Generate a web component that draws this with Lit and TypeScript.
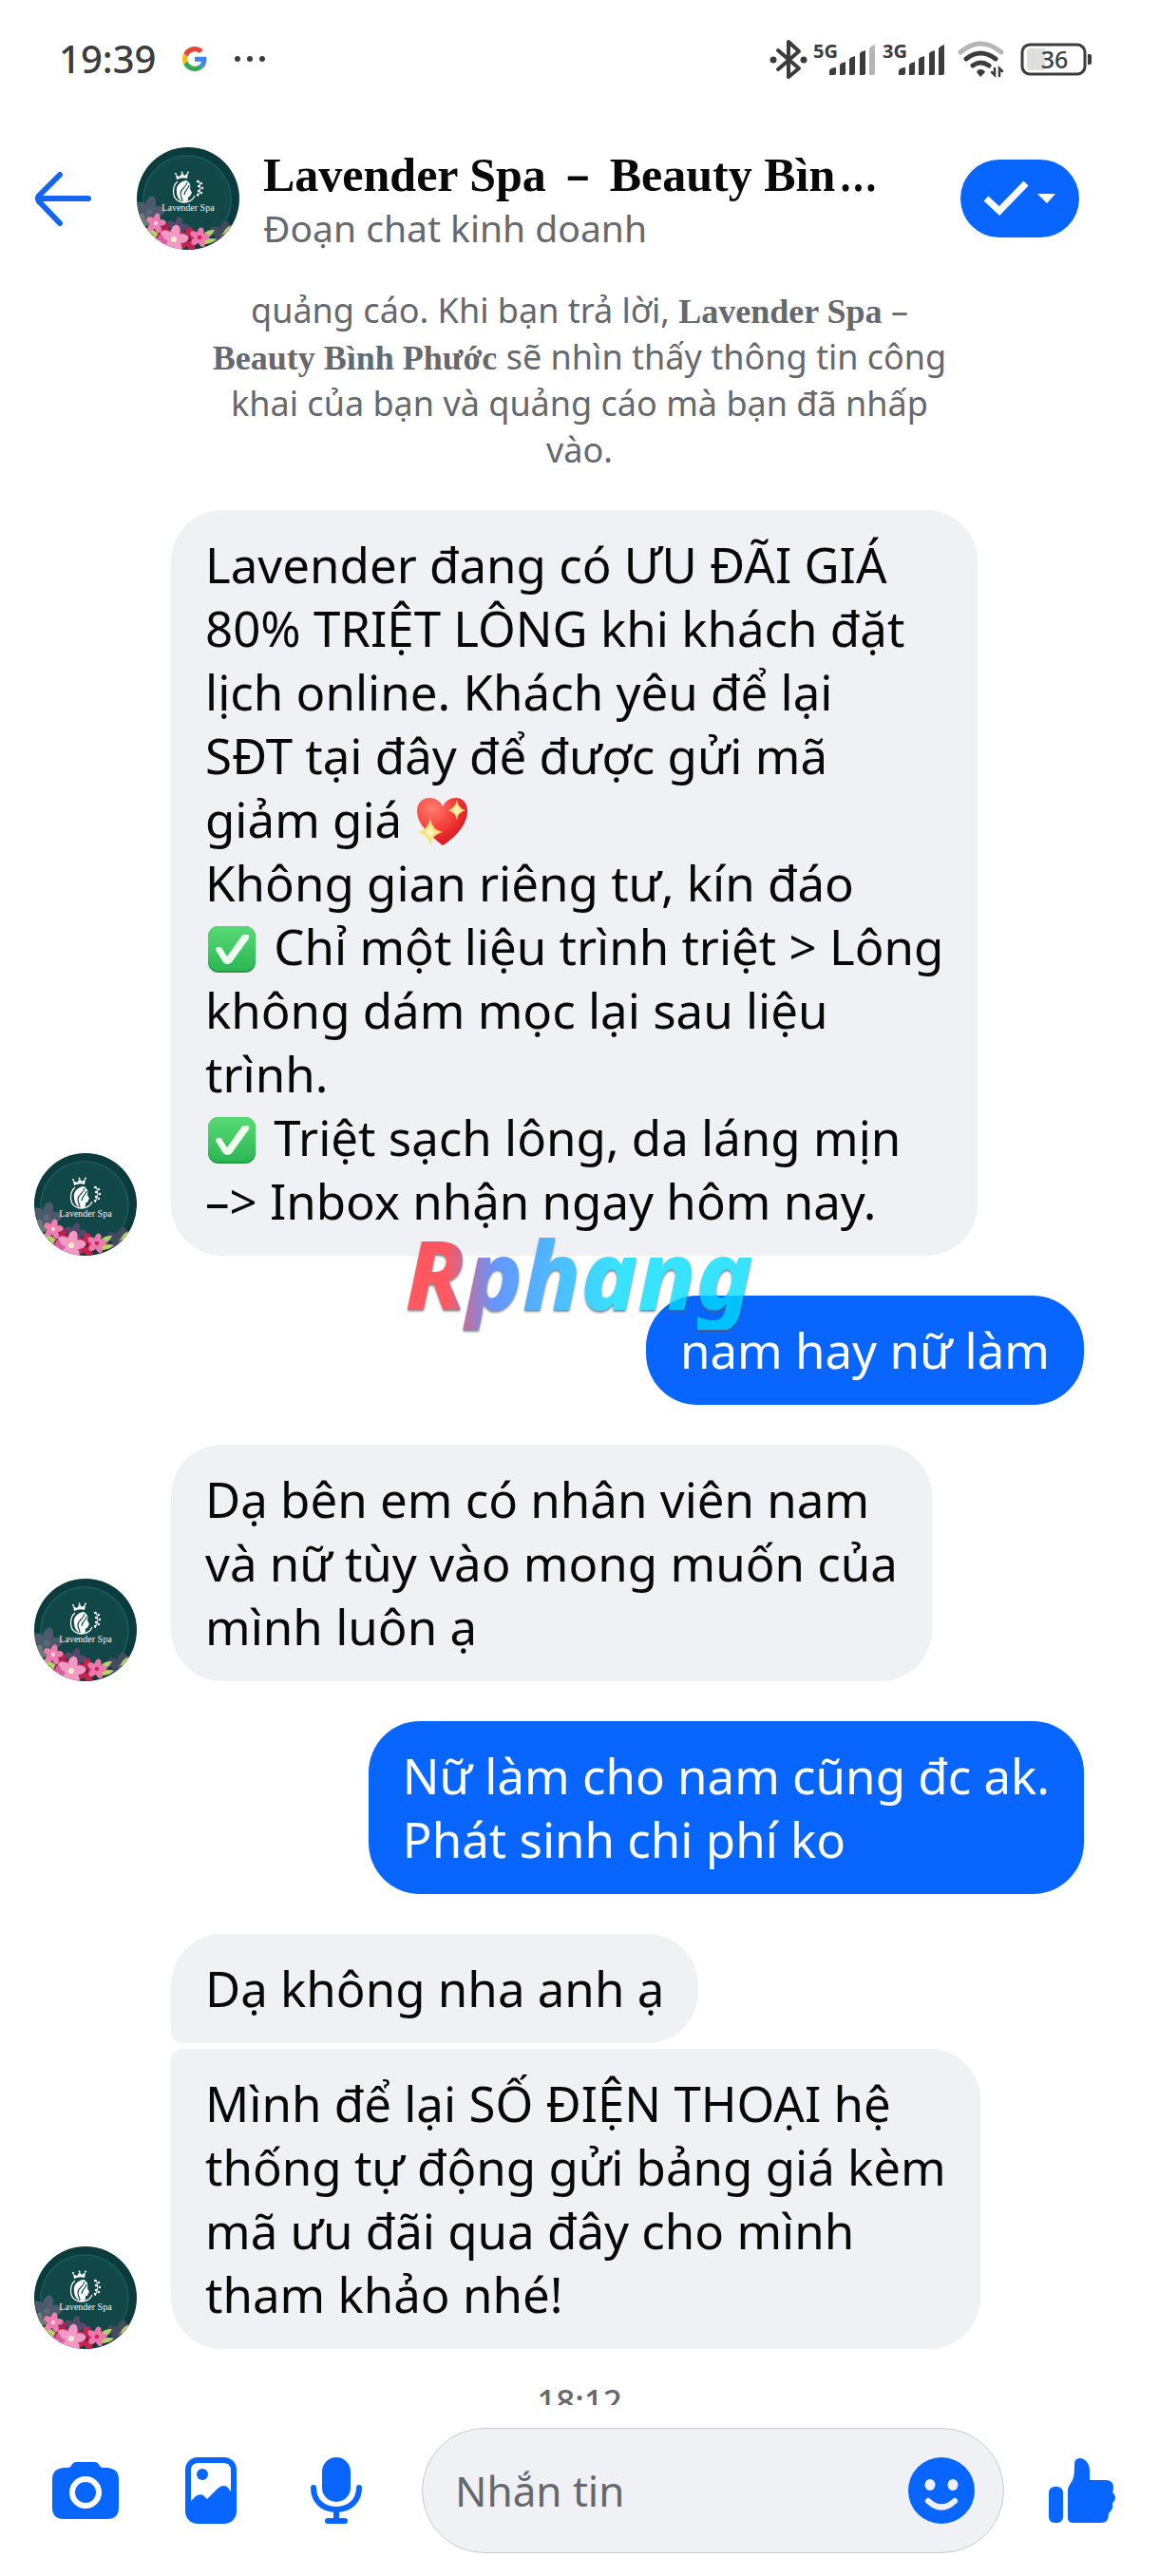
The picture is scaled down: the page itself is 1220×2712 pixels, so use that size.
import { LitElement, html, svg, css } from "lit";
import { customElement, property } from "lit/decorators.js";
import { classMap } from "lit/directives/class-map.js";

type Group = "single" | "first" | "last";

interface Message {
  from: "page" | "me";
  group: Group;
  lines: string[];
}

const MESSAGES: Message[] = [
  {
    from: "page",
    group: "single",
    lines: [
      "Lavender đang có ƯU ĐÃI GIÁ",
      "80% TRIỆT LÔNG khi khách đặt",
      "lịch online. Khách yêu để lại",
      "SĐT tại đây để được gửi mã",
      "giảm giá 💖",
      "Không gian riêng tư, kín đáo",
      "✅ Chỉ một liệu trình triệt > Lông",
      "không dám mọc lại sau liệu",
      "trình.",
      "✅ Triệt sạch lông, da láng mịn",
      "–> Inbox nhận ngay hôm nay.",
    ],
  },
  { from: "me", group: "single", lines: ["nam hay nữ làm"] },
  {
    from: "page",
    group: "single",
    lines: ["Dạ bên em có nhân viên nam", "và nữ tùy vào mong muốn của", "mình luôn ạ"],
  },
  { from: "me", group: "single", lines: ["Nữ làm cho nam cũng đc ak.", "Phát sinh chi phí ko"] },
  { from: "page", group: "first", lines: ["Dạ không nha anh ạ"] },
  {
    from: "page",
    group: "last",
    lines: [
      "Mình để lại SỐ ĐIỆN THOẠI hệ",
      "thống tự động gửi bảng giá kèm",
      "mã ưu đãi qua đây cho mình",
      "tham khảo nhé!",
    ],
  },
];

const heartEmoji = html`<svg class="emoji" viewBox="0 0 59 54" role="img" aria-label="💖">
  <defs>
    <radialGradient id="heart" cx="0.3" cy="0.22" r="0.85">
      <stop offset="0" stop-color="#ff7d70" />
      <stop offset="0.5" stop-color="#f5403c" />
      <stop offset="1" stop-color="#d80f1c" />
    </radialGradient>
  </defs>
  <path
    fill="url(#heart)"
    d="M30 52C20 44 3 31 3 16C3 7 9 2 16 2C23 2 28 6 30 11C33 5 38 2 44 2C51 2 56 8 56 16C56 32 40 46 30 52Z"
  />
  <path fill="#ffe27a" d="M45 4Q46 13 54 15Q46 17 45 25Q43 17 36 15Q43 13 45 4Z" />
  <path fill="#ffe27a" d="M17 24Q19 36 30 38Q19 40 17 52Q14 40 3 38Q14 36 17 24Z" />
  <path fill="#fff6c8" d="M45 9Q46 14 49 15Q46 16 45 20Q43 16 41 15Q43 14 45 9ZM17 31Q18 37 23 38Q18 39 17 45Q15 39 11 38Q15 37 17 31Z" />
</svg>`;

const checkEmoji = html`<svg class="emoji" viewBox="0 0 59 54" role="img" aria-label="✅">
  <defs>
    <linearGradient id="tick" x1="0" y1="0" x2="0" y2="1">
      <stop offset="0" stop-color="#58da75" />
      <stop offset="1" stop-color="#2cb755" />
    </linearGradient>
  </defs>
  <rect x="3" y="3" width="50" height="49" rx="11" fill="#27974a" />
  <rect x="3" y="3" width="50" height="47" rx="11" fill="url(#tick)" />
  <path
    fill="#effff0"
    d="M11 28Q11 26 13 25H16Q17 25 18 27L23 35L38 14Q39 12 41 12H45Q47 13 46 16L28 41Q26 43 23 43Q21 43 19 41Z"
  />
</svg>`;

function rich(line: string) {
  return line
    .split(/(💖|✅)/u)
    .map((part) => (part === "💖" ? heartEmoji : part === "✅" ? checkEmoji : part));
}

const flower = (x: number, y: number, r: number, fill: string, core: string) => svg`
  <g transform="translate(${x} ${y})">
    ${[0, 72, 144, 216, 288].map(
      (a) => svg`<ellipse cx="0" cy=${-r * 0.6} rx=${r * 0.38} ry=${r * 0.6} fill=${fill} transform="rotate(${a + 12})"/>`
    )}
    <circle r=${r * 0.24} fill=${core}/>
  </g>`;

@customElement("spa-avatar")
export class SpaAvatar extends LitElement {
  static styles = css`
    :host {
      display: block;
      flex: none;
      width: 108px;
      height: 108px;
      border-radius: 50%;
      overflow: hidden;
    }
    .art {
      display: block;
      width: 100%;
      height: 100%;
    }
    .name {
      font-family: "Liberation Serif", serif;
      font-size: 10px;
    }
  `;

  render() {
    return html`<svg class="art" viewBox="0 0 108 108" role="img" aria-label="Lavender Spa">
      <rect width="108" height="108" fill="#0b3b3c" />
      <circle cx="53" cy="55" r="46" fill="#11484a" stroke="#1d5c5c" stroke-width="1.5" />
      <circle cx="52" cy="56" r="41" fill="#124748" />
      <path fill="#fff" d="M42 34L41 29L45 31L48 27L50 30L54 27L53 33Q48 31 42 34Z" />
      <circle cx="41" cy="28" r="1" fill="#fff" />
      <circle cx="47.500" cy="26.500" r="1" fill="#fff" />
      <circle cx="54" cy="26.500" r="1" fill="#fff" />
      <path fill="#fff" d="M52 35C45 36 41 41 42 47C42 52 45 56 49 58C55 58 54 54 54 52C57 53 56 50 58 48L56 44C57 40 56 37 52 35Z" />
      <path fill="none" stroke="#124748" stroke-width="1.200" d="M53 37C52 43 46 43 46 49C46 52 48 54 48 57M55 40C55 44 50 45 50 50" />
      <path fill="none" stroke="#fff" stroke-width="1.200" d="M43 36C37 41 37 52 43 56C49 60 58 58 61 51" />
      <path fill="none" stroke="#fff" stroke-width="1" d="M64 52Q69 44 65 35" />
      <g fill="#fff">
        <circle cx="64" cy="36" r="1.200" /><circle cx="68" cy="38" r="1.200" />
        <circle cx="65" cy="41" r="1.200" /><circle cx="69" cy="43" r="1.200" />
        <circle cx="65" cy="46" r="1.200" /><circle cx="68" cy="48" r="1.200" />
        <circle cx="64" cy="50" r="1.200" />
      </g>
      ${flower(13, 68, 14, "#4d5a6c", "#5d6678")}
      ${flower(4, 80, 9, "#6d7d74", "#4d5a6c")}
      ${flower(43, 85, 10, "#54496b", "#6b5a80")}
      ${flower(91, 93, 13, "#454a5e", "#5b5a6e")}
      <g fill="#b9cf6a">
        <path d="M8 85Q16 84 25 93Q14 94 8 85ZM12 93Q20 90 30 98Q20 101 12 93Z" />
        <path d="M68 95Q72 86 82 87Q78 96 68 95ZM67 101Q75 94 84 97Q76 104 67 101ZM90 92Q94 84 99 82Q98 90 90 92Z" />
      </g>
      ${flower(29, 90, 9, "#b81f4e", "#7d1236")}
      ${flower(54, 97, 11, "#c22450", "#7d1236")}
      ${flower(20, 80, 9, "#f07db0", "#fbd0e0")}
      ${flower(66, 95, 9, "#ee78ad", "#c22450")}
      ${flower(39, 97, 13, "#f29ac6", "#ffe9c9")}
      ${flower(24, 100, 7, "#d85f9f", "#fbd0e0")}
      <text class="name" x="54" y="67" text-anchor="middle" fill="#f2f5f4">Lavender Spa</text>
    </svg>`;
  }
}

@customElement("chat-message")
export class ChatMessage extends LitElement {
  @property({ attribute: false }) message!: Message;

  static styles = css`
    :host {
      display: block;
    }
    .row {
      display: flex;
      align-items: flex-end;
      gap: 36px;
      padding: 0 79px 0 36px;
    }
    .mine {
      justify-content: flex-end;
    }
    .spacer {
      flex: none;
      width: 108px;
    }
    .bubble {
      margin: 0;
      padding: 24px 36px;
      border-radius: 54px;
      background: #f0f1f5;
      color: #080809;
      font-size: 51px;
      line-height: 67px;
    }
    .mine .bubble {
      background: #0866ff;
      color: #fff;
    }
    .first {
      border-bottom-left-radius: 12px;
    }
    .last {
      border-top-left-radius: 12px;
    }
    .line {
      display: block;
      white-space: nowrap;
    }
    .emoji {
      width: 59px;
      height: 54px;
      vertical-align: -10px;
    }
  `;

  render() {
    const { from, group, lines } = this.message;
    const mine = from === "me";
    return html`<div class=${classMap({ row: true, mine })}>
      ${mine
        ? null
        : group === "first"
          ? html`<span class="spacer"></span>`
          : html`<spa-avatar></spa-avatar>`}
      <p class=${classMap({ bubble: true, first: group === "first", last: group === "last" })}>
        ${lines.map((line) => html`<span class="line">${rich(line)}</span>`)}
      </p>
    </div>`;
  }
}

const signal = (label: string, full: boolean) => html`<svg width="67" height="52" viewBox="0 -8 67 52" role="img" aria-label="${label}">
  <text class="net" x="0" y="17" fill="#3c3c3c">${label}</text>
  <g fill="#3c3c3c">
    <path d="M17 35V30Q19 27 24 27V33Q24 35 22 35Z" />
    <path d="M28 35V24Q30 22 34 21V33Q34 35 32 35Z" />
    <path d="M38 35V18Q40 16 44 15V33Q44 35 42 35Z" />
    <path d="M49 35V12Q51 10 55 9V33Q55 35 53 35Z" />
    <path fill=${full ? "#3c3c3c" : "#b5b5b5"} d="M59 35V7Q61 4 65 3V33Q65 35 63 35Z" />
  </g>
</svg>`;

@customElement("status-bar")
export class StatusBar extends LitElement {
  static styles = css`
    :host {
      display: flex;
      align-items: center;
      justify-content: space-between;
      height: 124px;
      padding: 0 70px 0 62px;
      color: #3c3c3c;
    }
    .side {
      display: flex;
      align-items: center;
    }
    .left {
      gap: 28px;
    }
    .right {
      gap: 6px;
    }
    .time {
      font-size: 40px;
      font-weight: 500;
      line-height: 48px;
    }
    .net {
      font-size: 20px;
      font-weight: 700;
    }
    .level {
      font-size: 25px;
      font-weight: 500;
    }
    .wifi {
      margin: 0 10px 0 5px;
    }
  `;

  render() {
    return html`
      <div class="side left">
        <span class="time">19:39</span>
        <svg width="26" height="26" viewBox="0 0 48 48" role="img" aria-label="Google">
          <path fill="#EA4335" d="M24 9.500c3.540 0 6.710 1.220 9.210 3.600l6.850-6.850C35.900 2.380 30.470 0 24 0 14.620 0 6.510 5.380 2.560 13.220l7.980 6.190C12.430 13.720 17.740 9.500 24 9.500z" />
          <path fill="#4285F4" d="M46.980 24.550c0-1.570-.15-3.090-.38-4.550H24v9.020h12.940c-.58 2.960-2.260 5.480-4.780 7.180l7.730 6c4.510-4.180 7.090-10.360 7.090-17.650z" />
          <path fill="#FBBC05" d="M10.530 28.590c-.48-1.450-.76-2.990-.76-4.590s.27-3.140.76-4.590l-7.980-6.190C.92 16.460 0 20.120 0 24c0 3.880.92 7.540 2.560 10.780l7.970-6.190z" />
          <path fill="#34A853" d="M24 48c6.480 0 11.930-2.130 15.890-5.810l-7.730-6c-2.150 1.450-4.920 2.300-8.160 2.300-6.260 0-11.570-4.220-13.470-9.910l-7.980 6.190C6.510 42.620 14.620 48 24 48z" />
        </svg>
        <svg width="34" height="8" viewBox="0 0 34 8" fill="#3c3c3c" aria-hidden="true">
          <circle cx="4" cy="4" r="3" /><circle cx="17" cy="4" r="3" /><circle cx="30" cy="4" r="3" />
        </svg>
      </div>
      <div class="side right">
        <svg width="40" height="44" viewBox="0 0 40 44" role="img" aria-label="Bluetooth">
          <path fill="none" stroke="#3c3c3c" stroke-width="4" stroke-linejoin="round" stroke-linecap="round" d="M9 13L31 32L20 41V4L31 14L9 33" />
          <circle cx="4" cy="23" r="3.500" fill="#3c3c3c" />
          <circle cx="36" cy="23" r="3.500" fill="#3c3c3c" />
        </svg>
        ${signal("5G", false)} ${signal("3G", true)}
        <svg class="wifi" width="51" height="40" viewBox="0 0 51 40" role="img" aria-label="Wi-Fi" fill="none" stroke-linecap="round">
          <path stroke="#b5b5b5" stroke-width="5" d="M4 13Q25 -5 47 13" />
          <path stroke="#3c3c3c" stroke-width="5" d="M10 20Q25 8 41 20" />
          <path stroke="#3c3c3c" stroke-width="5" d="M17 27Q25 21 34 27" />
          <path fill="#3c3c3c" d="M25 31Q29 31 30 34L25 39L21 34Q22 31 25 31Z" />
          <path stroke="#3c3c3c" stroke-width="2.500" d="M40 30V37L37 34M45 38V30L48 33" />
        </svg>
        <svg width="76" height="36" viewBox="0 0 76 36" role="img" aria-label="Pin 36%">
          <rect x="2" y="3" width="66" height="31" rx="8" fill="#fff" stroke="#3c3c3c" stroke-width="3" />
          <path fill="#dedede" d="M11 7H26V30H11Q7 30 7 26V11Q7 7 11 7Z" />
          <path fill="#3c3c3c" d="M71 13H73Q75 13 75 15V22Q75 24 73 24H71Z" />
          <text class="level" x="36" y="28" text-anchor="middle" fill="#3c3c3c">36</text>
        </svg>
      </div>
    `;
  }
}

@customElement("chat-header")
export class ChatHeader extends LitElement {
  static styles = css`
    :host {
      display: flex;
      align-items: center;
      height: 170px;
      padding: 0 84px 0 36px;
    }
    button {
      padding: 0;
      border: 0;
      background: none;
      cursor: pointer;
    }
    .back {
      display: flex;
      margin-right: 48px;
    }
    .who {
      flex: 1;
      min-width: 0;
      padding: 0 25px;
      white-space: nowrap;
    }
    .title {
      margin: 0;
      color: #080809;
      font-size: 50px;
      font-weight: 500;
      line-height: 60px;
    }
    .serif {
      font-family: "Liberation Serif", serif;
      font-weight: 700;
    }
    .dash {
      padding: 0 8px;
    }
    .more {
      padding-left: 4px;
    }
    .sub {
      margin: 0;
      color: #65686c;
      font-size: 39px;
      line-height: 52px;
    }
    .label {
      display: flex;
      align-items: center;
      justify-content: center;
      width: 125px;
      height: 82px;
      border-radius: 41px;
      background: #0866ff;
    }
  `;

  render() {
    return html`
      <button class="back" aria-label="Quay lại">
        <svg width="60" height="66" viewBox="0 0 60 66" fill="none" stroke="#1565f0" stroke-width="6" stroke-linecap="round" stroke-linejoin="round">
          <path d="M57 33H4M27 8L5 30Q3 33 5 36L27 59" />
        </svg>
      </button>
      <spa-avatar></spa-avatar>
      <div class="who">
        <h1 class="title"><span class="serif">Lavender Spa</span><span class="dash"> – </span><span class="serif">Beauty Bìn</span><span class="more">…</span></h1>
        <p class="sub">Đoạn chat kinh doanh</p>
      </div>
      <button class="label" aria-label="Đánh dấu">
        <svg width="78" height="40" viewBox="0 0 78 40">
          <path fill="none" stroke="#fff" stroke-width="7" d="M3 20L17 33L45 4" />
          <path fill="#fff" d="M57 15H76L67 25Z" />
        </svg>
      </button>
    `;
  }
}

@customElement("chat-composer")
export class ChatComposer extends LitElement {
  static styles = css`
    :host {
      display: flex;
      align-items: center;
      height: 180px;
      padding-left: 24px;
    }
    button {
      display: flex;
      flex: none;
      align-items: center;
      justify-content: center;
      padding: 0;
      border: 0;
      background: none;
      cursor: pointer;
    }
    .tool {
      width: 132px;
      height: 132px;
    }
    .like {
      width: 163px;
      height: 132px;
    }
    .field {
      display: flex;
      flex: 1;
      align-items: center;
      box-sizing: border-box;
      min-width: 0;
      height: 132px;
      margin-left: 24px;
      padding: 0 30px 0 34px;
      border: 1px solid #c9cbd0;
      border-radius: 66px;
      background: #f0f1f5;
    }
    .input {
      flex: 1;
      min-width: 0;
      padding: 0;
      border: 0;
      outline: none;
      background: none;
      color: #080809;
      font-family: inherit;
      font-size: 44px;
      line-height: 60px;
    }
    .input::placeholder {
      color: #65686c;
      opacity: 1;
    }
  `;

  render() {
    return html`
      <button class="tool" aria-label="Máy ảnh">
        <svg width="70" height="60" viewBox="0 0 70 60" fill="#0866ff">
          <path d="M25 0H45Q48 0 50 4Q51 6 54 6H58Q70 7 70 18V48Q70 60 58 60H12Q0 60 0 48V18Q0 7 12 6H16Q19 6 20 4Q22 0 25 0Z" />
          <circle cx="35" cy="32" r="14" fill="none" stroke="#fff" stroke-width="6" />
        </svg>
      </button>
      <button class="tool" aria-label="Thư viện ảnh">
        <svg width="54" height="70" viewBox="0 0 54 70">
          <rect width="54" height="70" rx="13" fill="#0866ff" />
          <path fill="#fff" d="M14 6H40Q48 6 48 14V36L44 31Q39 28 34 33L23 44L19 40Q15 38 11 41L6 46V14Q6 6 14 6Z" />
          <circle cx="18" cy="18" r="6" fill="#0866ff" />
        </svg>
      </button>
      <button class="tool" aria-label="Ghi âm">
        <svg width="56" height="70" viewBox="0 0 56 70" fill="none" stroke="#0866ff" stroke-width="6" stroke-linecap="round">
          <rect x="13" y="0" width="30" height="47" rx="15" fill="#0866ff" stroke="none" />
          <path d="M4 32C4 46 14 55 28 55C42 55 52 46 52 32M28 56V66M19 67H37" />
        </svg>
      </button>
      <div class="field">
        <input class="input" type="text" placeholder="Nhắn tin" aria-label="Nhắn tin" />
        <button aria-label="Biểu tượng cảm xúc">
          <svg width="70" height="70" viewBox="0 0 70 70">
            <circle cx="35" cy="35" r="35" fill="#0866ff" />
            <ellipse cx="23" cy="29" rx="5.500" ry="6" fill="#f0f1f5" />
            <ellipse cx="47" cy="29" rx="5.500" ry="6" fill="#f0f1f5" />
            <path d="M21 46Q35 59 49 46" fill="none" stroke="#f0f1f5" stroke-width="6" stroke-linecap="round" />
          </svg>
        </button>
      </div>
      <button class="like" aria-label="Thích">
        <svg width="70" height="70" viewBox="0 0 70 70" fill="#0866ff">
          <rect x="0" y="31" width="15" height="38" rx="6" />
          <path d="M20 35C20 31 23 28 25 24C27 19 27 14 27 7Q27 1 33 1C40 2 43 8 43 14V24H60Q68 24 68 32Q68 35 67 37Q70 39 70 42Q70 46 67 48Q68 54 65 57Q63 58 63 60Q63 69 55 69H26Q20 69 20 64Z" />
        </svg>
      </button>
    `;
  }
}

@customElement("app-root")
export class AppRoot extends LitElement {
  static styles = css`
    :host {
      display: flex;
      flex-direction: column;
      height: 100vh;
      overflow: hidden;
      background: #fff;
      font-family: "Noto Sans", "Open Sans", sans-serif;
    }
    .thread {
      flex: 1;
      min-height: 0;
      overflow: hidden;
      padding-top: 8px;
    }
    .notice {
      max-width: 800px;
      margin: 0 auto 39px;
      color: #65686c;
      font-size: 36px;
      line-height: 49px;
      text-align: center;
    }
    .notice-line {
      display: block;
      white-space: nowrap;
    }
    .page-name {
      font-family: "Liberation Serif", serif;
      font-weight: 700;
      line-height: 36px;
    }
    .list {
      display: flex;
      flex-direction: column;
      gap: 42px;
    }
    .joined {
      margin-top: -36px;
    }
    .marked {
      position: relative;
    }
    .brand {
      position: absolute;
      left: 34%;
      bottom: -78px;
      z-index: 1;
      padding: 0 12px;
      background: linear-gradient(90deg, #ff2a35 14%, #3a78ff 27%, #00dcff 60%, #00dcff);
      background-clip: text;
      -webkit-background-clip: text;
      color: transparent;
      font-size: 100px;
      font-style: italic;
      font-weight: 800;
      line-height: 120px;
      opacity: 0.78;
      filter: drop-shadow(0 2px 1px #55606c);
    }
    .stamp {
      margin: 30px 0 0;
      color: #65686c;
      font-size: 35px;
      font-weight: 500;
      line-height: 49px;
      text-align: center;
    }
  `;

  render() {
    return html`
      <status-bar></status-bar>
      <chat-header></chat-header>
      <main class="thread">
        <p class="notice">
          <span class="notice-line">quảng cáo. Khi bạn trả lời, <b class="page-name">Lavender Spa</b> –</span>
          <span class="notice-line"><b class="page-name">Beauty Bình Phước</b> sẽ nhìn thấy thông tin công</span>
          <span class="notice-line">khai của bạn và quảng cáo mà bạn đã nhấp</span>
          <span class="notice-line">vào.</span>
        </p>
        <div class="list">
          ${MESSAGES.map(
            (message, i) => html`<div class=${classMap({ joined: message.group === "last", marked: i === 0 })}>
              <chat-message .message=${message}></chat-message>
              ${i === 0 ? html`<span class="brand">Rphang</span>` : null}
            </div>`
          )}
        </div>
        <p class="stamp">18:12</p>
      </main>
      <chat-composer></chat-composer>
    `;
  }
}
